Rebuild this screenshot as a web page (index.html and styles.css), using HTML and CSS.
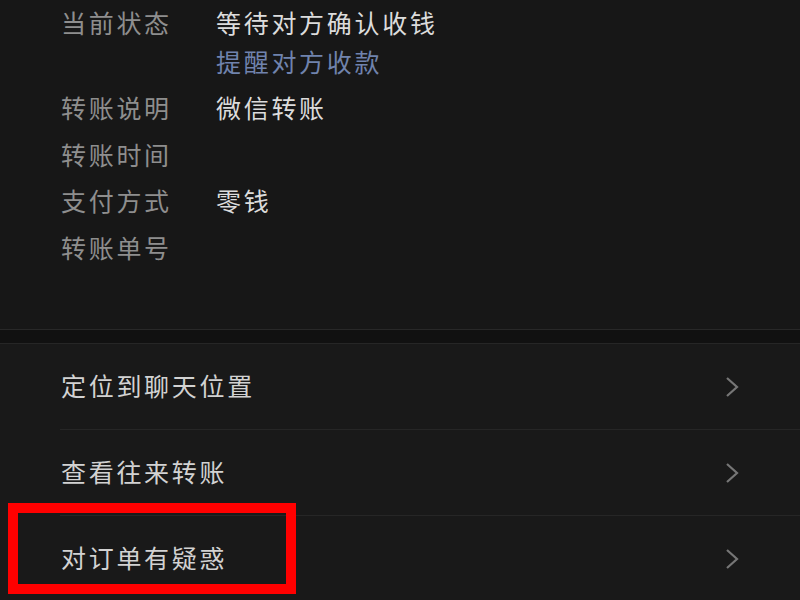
FILE: index.html
```html
<!DOCTYPE html>
<html lang="zh-CN">
<head>
	<meta charset="UTF-8">
	<title>转账详情</title>
	<link rel="stylesheet" href="styles.css">
</head>
<body>
	<section class="detail">
		<div class="row">
			<span class="label">当前状态</span>
			<div class="value">
				<p>等待对方确认收钱</p>
				<p class="link">提醒对方收款</p>
			</div>
		</div>
		<div class="row">
			<span class="label">转账说明</span>
			<div class="value"><p>微信转账</p></div>
		</div>
		<div class="row">
			<span class="label">转账时间</span>
			<div class="value"><p></p></div>
		</div>
		<div class="row">
			<span class="label">支付方式</span>
			<div class="value"><p>零钱</p></div>
		</div>
		<div class="row">
			<span class="label">转账单号</span>
			<div class="value"><p></p></div>
		</div>
	</section>
	<div class="gap"></div>
	<ul class="menu">
		<li class="menu-item">
			<span>定位到聊天位置</span>
			<svg class="arrow" width="16" height="22" viewBox="0 0 16 22"><path d="M3 2 L13 11 L3 20" fill="none" stroke="#767676" stroke-width="2.2"/></svg>
		</li>
		<li class="menu-item">
			<span>查看往来转账</span>
			<svg class="arrow" width="16" height="22" viewBox="0 0 16 22"><path d="M3 2 L13 11 L3 20" fill="none" stroke="#767676" stroke-width="2.2"/></svg>
		</li>
		<li class="menu-item">
			<span>对订单有疑惑</span>
			<svg class="arrow" width="16" height="22" viewBox="0 0 16 22"><path d="M3 2 L13 11 L3 20" fill="none" stroke="#767676" stroke-width="2.2"/></svg>
		</li>
	</ul>
	<div class="mark"></div>
</body>
</html>
```
FILE: styles.css
```css
html{
	overflow: hidden;
}
body{
	margin: 0;
	background: #171717;
	font-family: "Noto Sans CJK SC", "Noto Sans", sans-serif;
	font-size: 25px;
	letter-spacing: 2.7px;
}
p{
	margin: 0;
}
.detail{
	height: 326.5px;
	padding: 2.5px 0 0 61px;
	border-bottom: 1px solid #282828;
}
.row{
	display: flex;
	line-height: 39px;
	margin-bottom: 7.5px;
}
.label{
	width: 155px;
	flex-shrink: 0;
	color: #8e8e8e;
}
.value{
	color: #dcdcdc;
	min-height: 39px;
}
.value .link{
	color: #7083ad;
}
.gap{
	height: 13px;
	background: #111111;
	border-bottom: 1px solid #262626;
}
.menu{
	margin: 0;
	padding: 0;
	list-style: none;
	background: #191919;
}
.menu-item{
	height: 85px;
	margin-left: 60px;
	padding: 0 60px 0 1px;
	display: flex;
	align-items: center;
	justify-content: space-between;
	color: #d2d2d2;
	border-bottom: 1px solid #262626;
}
.menu-item span{
	margin-bottom: 4px;
}
.menu-item:last-child{
	border-bottom: none;
}
.arrow{
	display: block;
}
.mark{
	position: absolute;
	left: 8px;
	top: 503px;
	width: 268px;
	height: 71px;
	border: 10px solid #ff0000;
}
```
